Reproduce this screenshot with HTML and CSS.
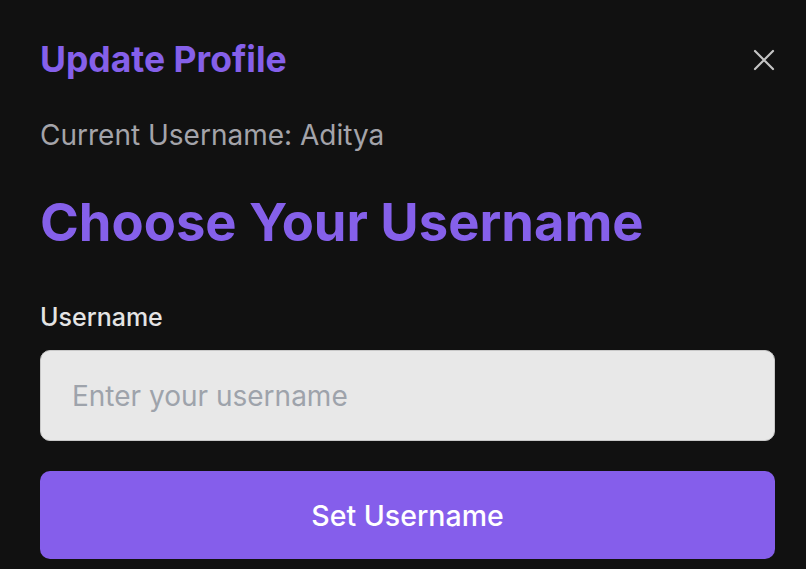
FILE: index.html
```html
<!DOCTYPE html>
<html lang="en">
<head>
<meta charset="utf-8">
<title>Update Profile</title>
<link rel="stylesheet" href="styles.css">
</head>
<body>
<div class="modal">
  <div class="header">
    <h2 class="title">Update Profile</h2>
    <button class="close" aria-label="Close">
      <svg width="22" height="22" viewBox="0 0 22 22" fill="none" stroke="#c4c4c4" stroke-width="2.2" stroke-linecap="round">
        <path d="M2 2 L20 20 M20 2 L2 20"/>
      </svg>
    </button>
  </div>
  <p class="current">Current Username: Aditya</p>
  <h1 class="heading">Choose Your Username</h1>
  <label class="label" for="username">Username</label>
  <input class="input" id="username" type="text" placeholder="Enter your username">
  <button class="submit">Set Username</button>
</div>
</body>
</html>
```
FILE: styles.css
```css
html, body {
  margin: 0;
  padding: 0;
  background: #111111;
}
body {
  font-family: Inter, "Noto Sans", sans-serif;
}
.modal {
  width: 735px;
  padding: 40px 0 0 40px;
  display: flex;
  flex-direction: column;
}
.header {
  display: flex;
  justify-content: space-between;
  align-items: center;
}
.title {
  margin: 0;
  font-size: 35.5px;
  line-height: 40px;
  font-weight: 700;
  color: #8560ea;
}
.close {
  background: none;
  border: 0;
  padding: 0;
  width: 22px;
  height: 22px;
  display: flex;
  cursor: pointer;
}
.current {
  margin: 39px 0 0;
  font-size: 28px;
  line-height: 32px;
  color: #a4a4aa;
}
.heading {
  margin: 43px 0 0;
  font-size: 52.5px;
  line-height: 56px;
  font-weight: 700;
  color: #8560ea;
}
.label {
  margin-top: 53px;
  font-size: 25px;
  line-height: 28px;
  font-weight: 500;
  color: #e4e4e4;
}
.input {
  margin-top: 19px;
  box-sizing: border-box;
  height: 91px;
  width: 100%;
  padding: 0 31px;
  border: 1px solid #c8c8c8;
  border-radius: 10px;
  background: #e8e8e8;
  font-family: inherit;
  font-size: 28px;
  color: #222;
  outline: none;
}
.input::placeholder {
  color: #9ea3ab;
}
.submit {
  margin-top: 30px;
  height: 88px;
  width: 100%;
  border: 0;
  border-radius: 10px;
  background: #855eeb;
  color: #ffffff;
  font-family: inherit;
  font-size: 28.5px;
  font-weight: 500;
  cursor: pointer;
}
```
